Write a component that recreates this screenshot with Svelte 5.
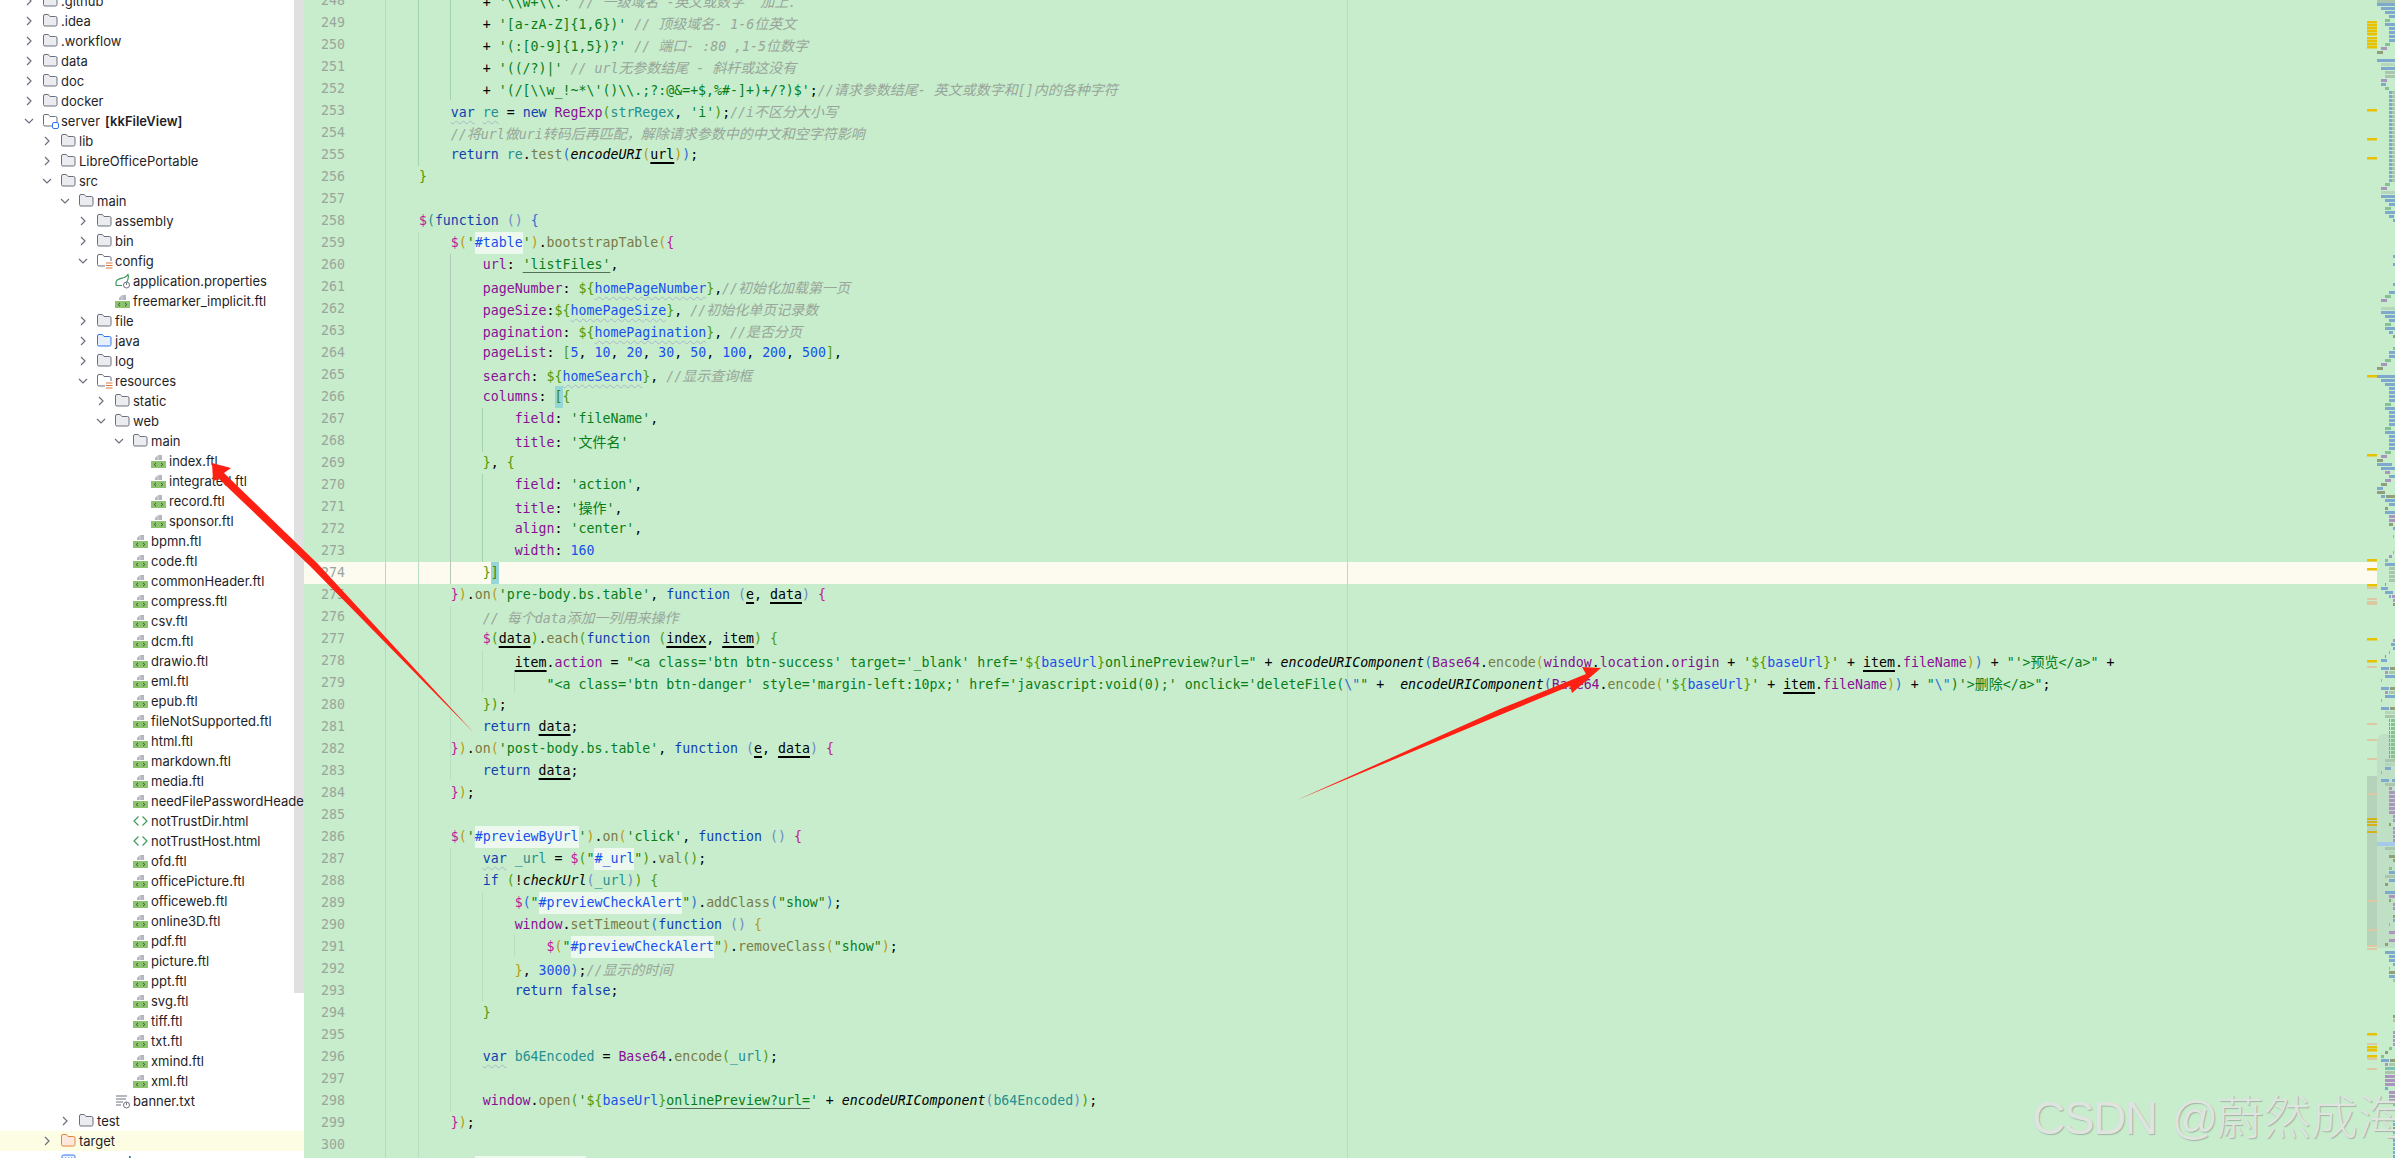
<script>
	// project tree: [label, level, icon, chevron]
	const ftl = (name, level) => [name, level, 'ftl', ''];
	const tree = [
		['.github', 0, 'folder', 'r'],
		['.idea', 0, 'folder', 'r'],
		['.workflow', 0, 'folder', 'r'],
		['data', 0, 'folder', 'r'],
		['doc', 0, 'folder', 'r'],
		['docker', 0, 'folder', 'r'],
		['server', 0, 'module', 'd'],
		['lib', 1, 'folder', 'r'],
		['LibreOfficePortable', 1, 'folder', 'r'],
		['src', 1, 'folder', 'd'],
		['main', 2, 'folder', 'd'],
		['assembly', 3, 'folder', 'r'],
		['bin', 3, 'folder', 'r'],
		['config', 3, 'res', 'd'],
		['application.properties', 4, 'props', ''],
		ftl('freemarker_implicit.ftl', 4),
		['file', 3, 'folder', 'r'],
		['java', 3, 'java', 'r'],
		['log', 3, 'folder', 'r'],
		['resources', 3, 'res', 'd'],
		['static', 4, 'folder', 'r'],
		['web', 4, 'folder', 'd'],
		['main', 5, 'folder', 'd'],
		...['index', 'integrated', 'record', 'sponsor'].map((n) => ftl(n + '.ftl', 6)),
		...['bpmn', 'code', 'commonHeader', 'compress', 'csv', 'dcm', 'drawio', 'eml', 'epub', 'fileNotSupported', 'html', 'markdown', 'media', 'needFilePasswordHeader'].map((n) => ftl(n + '.ftl', 5)),
		['notTrustDir.html', 5, 'html', ''],
		['notTrustHost.html', 5, 'html', ''],
		...['ofd', 'officePicture', 'officeweb', 'online3D', 'pdf', 'picture', 'ppt', 'svg', 'tiff', 'txt', 'xmind', 'xml'].map((n) => ftl(n + '.ftl', 5)),
		['banner.txt', 4, 'txt', ''],
		['test', 2, 'folder', 'r'],
		['target', 1, 'target', 'r'],
		['pom.xml', 1, 'maven', '']
	];

	// ‹class|text› marks a coloured token, everything else is plain
	const source = [
		`            + ‹s|'\\\\w+\\\\.'› ‹c|// 一级域名 -英文或数字  加上.›`,
		`            + ‹s|'[a-zA-Z]{1,6})'› ‹c|// 顶级域名- 1-6位英文›`,
		`            + ‹s|'(:[0-9]{1,5})?'› ‹c|// 端口- :80 ,1-5位数字›`,
		`            + ‹s|'((/?)|'› ‹c|// url无参数结尾 - 斜杆或这没有›`,
		`            + ‹s|'(/[\\\\w_!~*\\'()\\\\.;?:@&=+$,%#-]+)+/?)$'›;‹c|//请求参数结尾- 英文或数字和[]内的各种字符›`,
		`        ‹kw|var› ‹vw|re› = ‹k|new› ‹p|RegExp›‹r3|(›‹v|strRegex›, ‹s|'i'›‹r3|)›;‹c|//i不区分大小写›`,
		`        ‹c|//将url做uri转码后再匹配，解除请求参数中的中文和空字符影响›`,
		`        ‹k|return› ‹v|re›.‹f|test›‹r4|(›‹i|encodeURI›‹r2|(›‹a|url›‹r2|)›‹r4|)›;`,
		`    ‹r3|}›`,
		``,
		`    ‹r1|$›‹r5|(›‹k|function› ‹r6|()› ‹r4|{›`,
		`        ‹r1|$›‹r2|(›‹s|'›‹h|#table›‹s|'›‹r2|)›.‹f|bootstrapTable›‹r2|(›‹r1|{›`,
		`            ‹p|url›: ‹su|'listFiles'›,`,
		`            ‹p|pageNumber›: ‹r3|\${›‹t|homePageNumber›‹r3|}›,‹c|//初始化加载第一页›`,
		`            ‹p|pageSize›:‹r3|\${›‹t|homePageSize›‹r3|}›, ‹c|//初始化单页记录数›`,
		`            ‹p|pagination›: ‹r3|\${›‹t|homePagination›‹r3|}›, ‹c|//是否分页›`,
		`            ‹p|pageList›: ‹r3|[›‹n|5›, ‹n|10›, ‹n|20›, ‹n|30›, ‹n|50›, ‹n|100›, ‹n|200›, ‹n|500›‹r3|]›,`,
		`            ‹p|search›: ‹r3|\${›‹t|homeSearch›‹r3|}›, ‹c|//显示查询框›`,
		`            ‹p|columns›: ‹m|[›‹r3|{›`,
		`                ‹p|field›: ‹s|'fileName'›,`,
		`                ‹p|title›: ‹s|'文件名'›`,
		`            ‹r3|}›, ‹r3|{›`,
		`                ‹p|field›: ‹s|'action'›,`,
		`                ‹p|title›: ‹s|'操作'›,`,
		`                ‹p|align›: ‹s|'center'›,`,
		`                ‹p|width›: ‹n|160›`,
		`            ‹r3|}›‹m|]›`,
		`        ‹r1|}›‹r2|)›.‹f|on›‹r2|(›‹s|'pre-body.bs.table'›, ‹k|function› ‹r6|(›‹a|e›, ‹a|data›‹r6|)› ‹r1|{›`,
		`            ‹c|// 每个data添加一列用来操作›`,
		`            ‹r1|$›‹r3|(›‹a|data›‹r3|)›.‹f|each›‹r3|(›‹k|function› ‹r3|(›‹a|index›, ‹a|item›‹r3|)› ‹r3|{›`,
		`                ‹a|item›.‹p|action› = ‹s|"<a class='btn btn-success' target='_blank' href='›‹r3|\${›‹tp|baseUrl›‹r3|}›‹s|onlinePreview?url="› + ‹i|encodeURIComponent›‹r4|(›‹p|Base64›.‹f|encode›‹r2|(›‹p|window›.‹p|location›.‹p|origin› + ‹s|'›‹r3|\${›‹tp|baseUrl›‹r3|}›‹s|'› + ‹a|item›.‹p|fileName›‹r2|)›‹r4|)› + ‹s|"'>预览</a>"› +`,
		`                    ‹s|"<a class='btn btn-danger' style='margin-left:10px;' href='javascript:void(0);' onclick='deleteFile(›‹r4|\\"›‹s|"› +  ‹i|encodeURIComponent›‹r4|(›‹p|Base64›.‹f|encode›‹r2|(›‹s|'›‹r3|\${›‹tp|baseUrl›‹r3|}›‹s|'› + ‹a|item›.‹p|fileName›‹r2|)›‹r4|)› + ‹s|"›‹r4|\\"›‹s|)'>删除</a>"›;`,
		`            ‹r3|}›‹r3|)›;`,
		`            ‹k|return› ‹a|data›;`,
		`        ‹r1|}›‹r2|)›.‹f|on›‹r2|(›‹s|'post-body.bs.table'›, ‹k|function› ‹r6|(›‹a|e›, ‹a|data›‹r6|)› ‹r1|{›`,
		`            ‹k|return› ‹a|data›;`,
		`        ‹r1|}›‹r2|)›;`,
		``,
		`        ‹r1|$›‹r2|(›‹s|'›‹h|#previewByUrl›‹s|'›‹r2|)›.‹f|on›‹r2|(›‹s|'click'›, ‹k|function› ‹r6|()› ‹r1|{›`,
		`            ‹kw|var› ‹v|_url› = ‹r1|$›‹r3|(›‹s|"›‹h|#_url›‹s|"›‹r3|)›.‹f|val›‹r3|()›;`,
		`            ‹k|if› ‹r3|(›!‹i|checkUrl›‹r6|(›‹v|_url›‹r6|)›‹r3|)› ‹r3|{›`,
		`                ‹r1|$›‹r4|(›‹s|"›‹h|#previewCheckAlert›‹s|"›‹r4|)›.‹f|addClass›‹r4|(›‹s|"show"›‹r4|)›;`,
		`                ‹p|window›.‹f|setTimeout›‹r4|(›‹k|function› ‹r6|()› ‹r2|{›`,
		`                    ‹r1|$›‹r2|(›‹s|"›‹h|#previewCheckAlert›‹s|"›‹r2|)›.‹f|removeClass›‹r2|(›‹s|"show"›‹r2|)›;`,
		`                ‹r2|}›, ‹n|3000›‹r4|)›;‹c|//显示的时间›`,
		`                ‹k|return› ‹k|false›;`,
		`            ‹r3|}›`,
		``,
		`            ‹kw|var› ‹v|b64Encoded› = ‹p|Base64›.‹f|encode›‹r3|(›‹v|_url›‹r3|)›;`,
		``,
		`            ‹p|window›.‹f|open›‹r3|(›‹s|'›‹r3|\${›‹tp|baseUrl›‹r3|}›‹su|onlinePreview?url=›‹s|'› + ‹i|encodeURIComponent›‹r6|(›‹v|b64Encoded›‹r6|)›‹r3|)›;`,
		`        ‹r1|}›‹r2|)›;`,
		``,
		`        ‹r1|$›‹r2|(›‹s|'›‹h|#fileSelectBtn›‹s|'›‹r2|)›`
	];

	const cjk = /([\u3000-\u9fff\uff00-\uffef]+)/;

	const parse = (line) => {
		const out = [];
		for (const part of line.split(/(‹\w+\|[^›]*›)/)) {
			if (!part) continue;
			const m = part.match(/^‹(\w+)\|([^›]*)›$/);
			const cls = m ? m[1] : 'plain';
			const text = m ? m[2] : part;
			out.push({
				cls,
				runs: text.split(cjk).filter(Boolean).map((t) => ({ t, zh: cjk.test(t) }))
			});
		}
		return out;
	};

	const lines = source.map((s, i) => ({ no: 248 + i, tokens: parse(s) }));

	// indent guides: x, from, to, colour
	const guides = [
		[114, 0, 166, '#a3d3aa'],
		[146, 0, 100, '#a3d3aa'],
		[114, 232, 1158, '#b8dfbf'],
		[146, 254, 584, '#b4c8b7'],
		[146, 606, 780, '#b8dfbf'],
		[146, 848, 1112, '#b8dfbf'],
		[178, 408, 452, '#a3d3aa'],
		[178, 474, 562, '#a3d3aa'],
		[178, 650, 693, '#b8dfbf'],
		[178, 892, 1002, '#b8dfbf'],
		[210, 672, 693, '#b8dfbf'],
		[210, 935, 957, '#b8dfbf']
	];

	// error stripe marks next to the minimap
	const yellow = [22, 25, 28, 31, 34, 38, 41, 44, 47, 110, 139, 158, 376, 455, 560, 569, 585, 639, 661, 1034, 1047, 1050, 1056];
	const tan = [588, 599, 602, 604, 667, 724, 740, 759, 794, 901, 930, 946, 949, 1044, 1059, 1069];
	const gold = [819, 822, 825, 832];

	const C = { b: '#7fa8cd', g: '#87c093', p: '#ab95bf', x: '#a9c5ad', l: '#b5d6bb', o: '#8f9f7c', t: '#7fbfae' };
	const mini = [];
	const row = (y, left, c, w = 18 - left) => mini.push([y, left, w, C[c]]);
	const run = (a, b, left, c, w) => {
		for (let y = a; y <= b; y += 4) row(y, left, c, w);
	};
	// rows read off the minimap, top to bottom
	row(1, 0, 'x'); row(4, 0, 'b'); row(8, 4, 'b'); row(12, 8, 'b'); row(16, 12, 'b');
	row(20, 8, 'g', 5); row(24, 8, 'b'); run(28, 40, 12, 'b'); row(44, 8, 'g', 5); row(48, 4, 'p', 6);
	row(52, 0, 'o', 6); row(60, 0, 'b'); row(64, 4, 'l'); row(68, 4, 'b'); row(72, 8, 'x'); row(76, 8, 'x');
	row(80, 4, 'p', 6); row(84, 4, 'b', 5); row(88, 8, 'g', 4);
	for (let y = 92; y <= 180; y += 4) { row(y, 12, 'x'); row(y, 12, 'b', 3); }
	row(184, 8, 'g', 5); row(188, 4, 'p', 6); row(192, 4, 'l'); row(196, 4, 'b'); row(200, 8, 'b');
	row(204, 12, 'b'); row(208, 8, 'g', 6); row(212, 8, 'b'); row(216, 12, 'b', 5); row(220, 16, 'b');
	row(256, 16, 'b'); row(264, 16, 'b'); row(284, 16, 'b'); row(292, 12, 'b'); row(296, 8, 'g', 6);
	row(300, 4, 'p', 6); row(308, 4, 'l'); row(312, 4, 'b'); row(316, 8, 'b'); row(320, 12, 'b');
	row(324, 8, 'g', 6); row(328, 8, 'b'); row(332, 12, 'b', 4); row(336, 16, 'o'); row(348, 16, 'g');
	row(352, 12, 'b'); row(356, 12, 'b'); row(360, 8, 'g', 6); row(364, 4, 'p', 6); row(368, 0, 'o', 6);
	row(376, 0, 'b'); row(380, 4, 'b'); row(384, 8, 'b'); run(388, 400, 12, 'b'); row(404, 8, 'g', 6);
	row(408, 8, 'b'); run(412, 424, 12, 'b'); row(428, 8, 'g', 6); row(432, 8, 'b'); run(436, 448, 12, 'b');
	row(452, 8, 'g', 6); row(456, 4, 'p', 6); row(460, 0, 'o', 6); row(464, 0, 'b', 15); row(468, 4, 'b');
	row(472, 8, 'p', 5); row(476, 12, 'b'); row(480, 8, 'p', 6); row(484, 4, 'o', 6); row(488, 0, 'b', 6);
	row(492, 0, 'o', 8); row(496, 4, 'b', 4); row(496, 9, 'o'); row(500, 8, 'b'); row(504, 12, 'b');
	row(508, 8, 'o', 3); row(512, 8, 'b'); run(516, 520, 12, 'p'); row(524, 12, 'o', 4); row(528, 16, 'b');
	row(536, 16, 'g', 1); row(552, 16, 'g', 1); row(556, 12, 'p', 3); row(560, 8, 'g', 3); row(564, 8, 'b');
	run(568, 580, 12, 'x'); row(584, 8, 'o', 1); row(588, 4, 'b', 7); row(592, 8, 'b', 8); row(596, 12, 'b', 2);
	row(596, 15, 'p'); row(600, 16, 'p'); row(604, 16, 'o'); row(640, 16, 'p'); row(644, 14, 'b');
	row(648, 16, 'b'); row(652, 12, 'g', 1); row(656, 8, 'o', 1); row(660, 4, 'b', 6); row(668, 4, 'b', 8);
	row(668, 13, 'o'); row(672, 8, 'p', 3); row(672, 12, 'x'); row(676, 8, 'b'); row(680, 4, 'g', 1);
	row(688, 4, 'b', 8); row(688, 13, 'o'); row(692, 8, 'p', 3); row(692, 12, 'x'); row(696, 8, 'b');
	row(700, 4, 'g', 1); row(708, 4, 'b', 8); row(708, 13, 'o'); row(712, 8, 'l'); row(716, 8, 'x');
	for (let y = 720; y <= 756; y += 4) { row(y, 12, 'o', 1); row(y, 14, 'g'); }
	row(760, 8, 'x'); row(764, 8, 'l'); row(768, 8, 'b', 6); row(772, 4, 'g', 1); row(780, 4, 'b', 8);
	row(780, 15, 'b'); row(784, 8, 'x'); row(788, 12, 'p', 3); run(792, 812, 12, 'p');
	row(816, 16, 'p'); row(820, 16, 'p'); row(824, 12, 'o', 2); run(828, 840, 16, 'p');
	row(848, 8, 'x'); row(852, 12, 'l'); row(856, 12, 'o'); row(860, 16, 'o'); row(868, 12, 'g', 3);
	row(872, 12, 'b'); row(876, 8, 'x'); row(880, 12, 'b'); row(884, 8, 'o', 3); row(892, 8, 'b');
	row(896, 12, 'p'); row(900, 12, 'o', 2); row(904, 16, 'p'); row(908, 16, 'p'); row(916, 16, 'o');
	row(920, 16, 'b'); row(924, 12, 'g', 1); row(932, 12, 'p'); row(940, 12, 'p'); row(944, 8, 'o', 3);
	row(952, 8, 'b'); row(956, 12, 'b'); row(960, 12, 'b'); row(964, 16, 'b'); row(968, 12, 'g', 1);
	row(972, 12, 'o'); row(976, 12, 'b'); row(980, 16, 'x'); row(1016, 16, 'o'); row(1020, 16, 'x');
	run(1032, 1044, 16, 'p'); row(1048, 12, 'g', 3); row(1052, 8, 'o', 3); row(1056, 4, 'g', 3);
	row(1060, 4, 'b', 8); row(1060, 13, 'o'); row(1064, 8, 'p', 3); row(1064, 12, 'x'); row(1068, 8, 't');
	row(1072, 8, 'x'); run(1076, 1084, 8, 'p'); row(1088, 8, 'b', 3); run(1092, 1100, 12, 'p');
	row(1104, 16, 'g'); run(1120, 1124, 16, 'b'); row(1128, 16, 'o'); run(1132, 1156, 16, 'b');
</script>

{#snippet chevron(dir)}
	<svg class="chev" width="10" height="10" viewBox="0 0 10 10">
		{#if dir === 'r'}
			<path d="M3 1l4 4-4 4" />
		{:else}
			<path d="M1 3l4 4 4-4" />
		{/if}
	</svg>
{/snippet}

{#snippet folder(fill, stroke)}
	<path d="M.5 3A1.5 1.5 0 0 1 2 1.5h3.3l1.7 2h5.5A1.5 1.5 0 0 1 14 5v6.5a1.5 1.5 0 0 1-1.5 1.5H2A1.5 1.5 0 0 1 .5 11.5z" fill={fill} stroke={stroke} />
{/snippet}

{#snippet icon(kind)}
	<svg class="icon" width="16" height="16" viewBox="0 0 16 16">
		{#if kind === 'folder'}
			{@render folder('#ebecf0', '#6c707e')}
		{:else if kind === 'java'}
			{@render folder('#e7effd', '#3574f0')}
		{:else if kind === 'target'}
			{@render folder('#fde8de', '#e8833a')}
		{:else if kind === 'module'}
			{@render folder('#fff', '#6c707e')}
			<rect x="9.5" y="9.5" width="6" height="6" rx="1.5" fill="#fff" stroke="#3574f0" />
		{:else if kind === 'res'}
			{@render folder('#fff', '#6c707e')}
			<rect x="8" y="8" width="8" height="8" fill="#fff" />
			<path d="M9 10h6.5M9 12.5h6.5M9 15h6.5" stroke="#d9763a" />
		{:else if kind === 'ftl'}
			<path d="M4 7V5l3-3h4v5z" fill="#b4b7bf" />
			<path d="M7 2v5" stroke="#fff" stroke-width=".5" />
			<rect x="0" y="8" width="15" height="7" fill="#8cc36f" />
			<path d="M5 9.8L3.200 11.500 5 13.200M10 9.800l1.800 1.700-1.800 1.700" fill="none" stroke="#34452a" stroke-width=".9" />
		{:else if kind === 'html'}
			<path d="M5.500 3.500L1 8l4.500 4.500M9.500 3.500L14 8l-4.500 4.500" fill="none" stroke="#3f9a5d" stroke-width="1.200" />
		{:else if kind === 'props'}
			<path d="M1 9.500C1 6 6 5.500 8 5c3-.8 4-2.500 5-3.500 1 3-.3 6-1.500 8M1.500 12.500C1 12 .8 11 1 9.500M1.500 12.500H7" fill="none" stroke="#3d9a5b" stroke-width="1.200" />
			<circle cx="11.500" cy="12" r="3" fill="#fff" stroke="#6c707e" />
			<path d="M11.500 9.500v2.500" stroke="#6c707e" />
		{:else if kind === 'txt'}
			<path d="M1 3h11M1 6h10M1 9h7M1 12h5" stroke="#6c707e" />
			<circle cx="11.500" cy="12" r="3" fill="#fff" stroke="#6c707e" />
			<path d="M11.500 9.500v2.500" stroke="#6c707e" />
		{:else if kind === 'maven'}
			<rect x="1" y="2" width="13" height="12" rx="1.500" fill="#e7effd" stroke="#3574f0" />
			<path d="M4 5h1M7 5h1M10 5h1" stroke="#3574f0" />
		{/if}
	</svg>
{/snippet}

<div class="page">
	<aside class="sidebar">
		<div class="scrollbar"></div>
		{#each tree as [label, level, kind, chev]}
			<div class="node" class:current={label === 'target'} style="padding-left:{24 + level * 18}px">
				<span class="chev-slot">
					{#if chev}{@render chevron(chev)}{/if}
				</span>
				{@render icon(kind)}
				<span class="label">{label}</span>
				{#if label === 'server'}<b class="module">[kkFileView]</b>{/if}
			</div>
		{/each}
	</aside>

	<main class="editor">
		<svg class="guides" width="2091" height="1158">
			<rect x="1043" y="0" width="1" height="1158" fill="#bcd9c2" />
			<rect x="81" y="0" width="1" height="1158" fill="#b8d8be" />
			{#each guides as [x, y1, y2, c]}
				<rect x={x} y={y1} width="1" height={y2 - y1} fill={c} />
			{/each}
		</svg>

		<div class="lines">
			{#each lines as line}
				<div class="line" class:caret={line.no === 274}>
					<span class="no">{line.no}</span>
					<code class="text">{#each line.tokens as tok}<span class={tok.cls}>{#each tok.runs as r}{#if r.zh}<span class="zh">{r.t}</span>{:else}{r.t}{/if}{/each}</span>{/each}</code>
				</div>
			{/each}
		</div>

		<svg class="minimap" width="28" height="1158">
			<rect x="10" y="0" width="18" height="1158" fill="#c7edcc" />
			<path d="M10 948V742a8 8 0 0 1 8-8H28v214z" fill="#bfe0c5" />
			<rect x="0" y="776" width="10" height="170" fill="#b5d3ba" />
			<rect x="10" y="842" width="18" height="4" fill="#a6c9ea" />
			{#each yellow as y}<rect x="0" y={y - 1} width="10" height="2.500" fill="#e8c200" />{/each}
			{#each gold as y}<rect x="0" y={y - 1} width="10" height="2" fill="#d4b31a" />{/each}
			{#each tan as y}<rect x="0" y={y - 1} width="10" height="2" fill="#dcc9a4" />{/each}
			{#each mini as [y, left, w, c]}<rect x={10 + left} y={y - 1} width={w} height="3" fill={c} />{/each}
		</svg>

		<div class="watermark">CSDN @<span class="mark-zh">蔚然成海</span></div>
	</main>

	<svg class="arrows" width="2395" height="1158">
		<polygon points="212,463 231,468 224,473 317,563 474,733 310,566 219,479 213,481" fill="#fe2013" />
		<polygon points="1601,668 1572,693 1570,686 1500,715 1297,800 1500,709 1586,674 1582,667" fill="#fe2013" />
	</svg>
</div>

<style>
	:global(body) {
		margin: 0;
		overflow: hidden;
		background: #fff;
	}

	.page {
		display: flex;
		height: 1158px;
		width: 2395px;
		overflow: hidden;
		position: relative;
	}

	.sidebar {
		flex: 0 0 304px;
		height: 100%;
		overflow: hidden;
		position: relative;
		background: #fff;
		font: 13px/20px Inter, 'Noto Sans', sans-serif;
		color: #1f1e26;
	}

	.scrollbar {
		position: absolute;
		left: 294px;
		top: 0;
		width: 10px;
		height: 993px;
		background: #e0e0e0;
	}

	.node {
		display: flex;
		align-items: center;
		height: 20px;
		white-space: nowrap;
		position: relative;
		top: -9px;
	}

	.node.current {
		background: #fdfde3;
	}

	.chev-slot {
		flex: 0 0 19px;
		display: flex;
	}

	.chev path {
		fill: none;
		stroke: #6c707e;
		stroke-width: 1.200;
	}

	.icon {
		flex: 0 0 16px;
		margin-right: 2px;
		overflow: visible;
	}

	.module {
		font-weight: 600;
		margin-left: 5px;
	}

	.editor {
		flex: 1;
		position: relative;
		overflow: hidden;
		background: #c7edcc;
	}

	.guides {
		position: absolute;
		left: 0;
		top: 0;
		z-index: 1;
		pointer-events: none;
	}

	.lines {
		margin-top: -10px;
		position: relative;
	}

	.line {
		display: flex;
		height: 22px;
		font: 13.26px/22px 'DejaVu Sans Mono', 'Noto Sans CJK SC', monospace;
		white-space: pre;
		color: #000;
	}

	.line.caret {
		background: #fdfaf0;
	}

	.no {
		flex: 0 0 41px;
		text-align: right;
		color: #9aa69c;
	}

	.text {
		font: inherit;
		margin-left: 42px;
		position: relative;
		z-index: 2;
	}

	.zh {
		font-family: 'Noto Sans CJK SC', sans-serif;
		font-size: 14px;
	}

	.k, .kw { color: #0f3fae; }
	.kw { text-decoration: underline wavy #a9b7c9 1px; text-underline-offset: 3px; }
	.s { color: #067d17; }
	.su { color: #067d17; text-decoration: underline; text-decoration-color: #55705a; text-underline-offset: 3px; }
	.c { color: #98a59a; font-style: italic; }
	.f { color: #7a7a43; }
	.p { color: #871094; }
	.v { color: #248f8f; }
	.vw { color: #248f8f; text-decoration: underline wavy #a9b7c9 1px; text-underline-offset: 3px; }
	.n { color: #1750eb; }
	.i { font-style: italic; }
	.a { text-decoration: underline 1.500px #000; text-underline-offset: 3px; }
	.t { color: #1750eb; text-decoration: underline wavy #a9b7c9 1px; text-underline-offset: 3px; }
	.tp { color: #1750eb; }
	.h { color: #1750eb; background: #edf9ef; display: inline-block; height: 22px; }
	.m { color: #3a8a00; background: #97d6d6; display: inline-block; height: 22px; }
	.r1 { color: #c1189a; }
	.r2 { color: #b89a10; }
	.r3 { color: #4f9a06; }
	.r4 { color: #2a6fd0; }
	.r5 { color: #1f8f8f; }
	.r6 { color: #6d8bc4; }

	.minimap {
		position: absolute;
		right: 0;
		top: 0;
		z-index: 3;
	}

	.watermark {
		position: absolute;
		left: 1728px;
		top: 1087px;
		z-index: 4;
		font: 46px/54px 'Liberation Sans', 'Noto Sans CJK SC', sans-serif;
		letter-spacing: -1.5px;
		word-spacing: 4px;
		color: #dfe4df;
		text-shadow: 1px 1px 1px #a3b3a6;
		white-space: nowrap;
	}

	.mark-zh {
		font-size: 47px;
		letter-spacing: 0;
		font-family: 'Noto Sans CJK SC', sans-serif;
		font-weight: 300;
	}

	.arrows {
		position: absolute;
		left: 0;
		top: 0;
		z-index: 5;
		pointer-events: none;
	}
</style>
